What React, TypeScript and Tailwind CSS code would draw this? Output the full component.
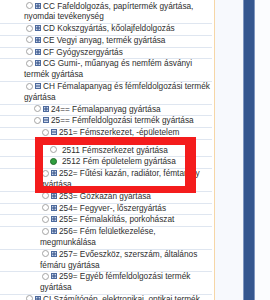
import React from 'react';

type Row = {
  level: number;
  icon?: 'plus' | 'minus';
  checked?: boolean;
  text: string;
  gap?: boolean;
};

const rows: Row[] = [
  { level: 1, icon: 'plus', text: 'CC Fafeldolgozás, papírtermék gyártása, nyomdai tevékenység' },
  { level: 1, icon: 'plus', text: 'CD Kokszgyártás, kőolajfeldolgozás' },
  { level: 1, icon: 'plus', text: 'CE Vegyi anyag, termék gyártása' },
  { level: 1, icon: 'plus', text: 'CF Gyógyszergyártás' },
  { level: 1, icon: 'plus', text: 'CG Gumi-, műanyag és nemfém ásványi termék gyártása' },
  { level: 1, icon: 'minus', text: 'CH Fémalapanyag és fémfeldolgozási termék gyártása' },
  { level: 2, icon: 'plus', text: '24== Fémalapanyag gyártása' },
  { level: 2, icon: 'minus', text: '25== Fémfeldolgozási termék gyártása' },
  { level: 3, icon: 'minus', text: '251= Fémszerkezet, -épületelem' },
  { level: 4, text: '2511 Fémszerkezet gyártása', gap: true },
  { level: 4, checked: true, text: '2512 Fém épületelem gyártása' },
  { level: 3, icon: 'plus', text: '252= Fűtési kazán, radiátor, fémtartály gyártása' },
  { level: 3, icon: 'plus', text: '253= Gőzkazán gyártása' },
  { level: 3, icon: 'plus', text: '254= Fegyver-, lőszergyártás' },
  { level: 3, icon: 'plus', text: '255= Fémalakítás, porkohászat' },
  { level: 3, icon: 'plus', text: '256= Fém felületkezelése, megmunkálása' },
  { level: 3, icon: 'plus', text: '257= Evőeszköz, szerszám, általános fémáru gyártása' },
  { level: 3, icon: 'plus', text: '259= Egyéb fémfeldolgozási termék gyártása' },
  { level: 1, icon: 'plus', text: 'CI Számítógép, elektronikai, optikai termék gyártása' },
];

const indent: Record<number, string> = {
  1: 'pl-[24px]',
  2: 'pl-[32px]',
  3: 'pl-[40px]',
  4: 'pl-[48px]',
};

const ToggleIcon = ({ kind }: { kind: 'plus' | 'minus' }) => (
  <svg width="6" height="6" viewBox="0 0 6 6" className="inline-block align-[0px] ml-[2px]">
    <rect x="0.5" y="0.5" width="5" height="5" fill="#c9d5ea" stroke="#4d6a9d" />
    <line x1="1" y1="3" x2="5" y2="3" stroke="#2d4b82" />
    {kind === 'plus' && <line x1="3" y1="1" x2="3" y2="5" stroke="#2d4b82" />}
  </svg>
);

const Radio = ({ checked }: { checked?: boolean }) => (
  <span
    className={
      checked
        ? 'inline-block w-[7px] h-[7px] rounded-full border border-[#1f6a28] bg-[#2f9f3f] align-[-0.5px] ml-[2px]'
        : 'inline-block w-[7px] h-[7px] rounded-full border border-[#a3a3a3] bg-white align-[-0.5px] ml-[2px]'
    }
  />
);

export default function App() {
  return (
    <div
      className="relative w-[270px] h-[300px] overflow-hidden flex bg-white text-[#2e2e2e] text-[8.25px] leading-[10.8px]"
      style={{ fontFamily: '"Liberation Sans", Arial, sans-serif' }}
    >
      {/* tree panel */}
      <div className="w-[215px] shrink-0 border-r border-[#f6d6a6] pt-[1.5px]">
        <div className="w-[212px]">
          {rows.map((r, i) => (
            <div
              key={i}
              className={`border-b border-[#dfe6f0] ${indent[r.level]} ${r.gap ? 'mt-[5.5px]' : ''}`}
            >
              <Radio checked={r.checked} />
              {r.icon ? <ToggleIcon kind={r.icon} /> : null}
              <span className={r.icon ? 'ml-[2px]' : 'ml-[5px]'}>{r.text}</span>
            </div>
          ))}
        </div>
      </div>

      {/* splitter */}
      <div className="flex-1 flex">
        <div className="w-[28px] bg-[#f7f9fd]" />
        <div className="w-[12px] bg-[#35578f] border-x border-[#8097c0]" />
        <div className="flex-1 bg-[#fbfcfe]" />
      </div>

      {/* annotation frame */}
      <div className="absolute left-[35px] top-[137px] w-[161px] h-[56px] border-[8px] border-r-[11px] border-b-[7px] border-[#f41c1c]" />
    </div>
  );
}
